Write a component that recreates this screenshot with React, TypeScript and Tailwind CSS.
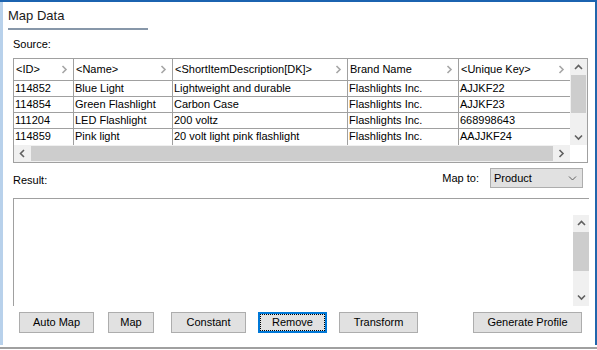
import React from "react";

const headers = ["<ID>", "<Name>", "<ShortItemDescription[DK]>", "Brand Name", "<Unique Key>"];
const colW = ["w-[60px]", "w-[99px]", "w-[175px]", "w-[111px]", "w-[111px]"];

const rows = [
  ["114852", "Blue Light", "Lightweight and durable", "Flashlights Inc.", "AJJKF22"],
  ["114854", "Green Flashlight", "Carbon Case", "Flashlights Inc.", "AJJKF23"],
  ["111204", "LED Flashlight", "200 voltz", "Flashlights Inc.", "668998643"],
  ["114859", "Pink light", "20 volt light pink flashlight", "Flashlights Inc.", "AAJJKF24"],
];

const Chevron = ({ dir, color = "#606060" }: { dir: "up" | "down" | "left" | "right"; color?: string }) => {
  const d = {
    up: "M1 5l3.5-3.5L8 5",
    down: "M1 1.5L4.5 5 8 1.5",
    left: "M5 1L1.5 4.5 5 8",
    right: "M1.5 1L5 4.5 1.5 8",
  }[dir];
  const vertical = dir === "up" || dir === "down";
  return (
    <svg width={vertical ? 9 : 7} height={vertical ? 7 : 9} viewBox={vertical ? "0 0 9 7" : "0 0 7 9"}>
      <path d={d} fill="none" stroke={color} strokeWidth="1.6" />
    </svg>
  );
};

const Button = ({ label, width, focused }: { label: string; width: string; focused?: boolean }) => (
  <button
    className={
      focused
        ? `${width} h-[21px] flex items-center justify-center bg-[#e1e1e1] border-2 border-[#0078d7] outline-1 outline-dotted outline-black outline-offset-[-3px]`
        : `${width} h-[21px] flex items-center justify-center bg-[#e1e1e1] border border-[#adadad]`
    }
  >
    {label}
  </button>
);

export default function App() {
  return (
    <div className="w-[597px] h-[349px] bg-white border-t-2 border-t-[#1b63b0] border-b-2 border-b-[#a0a0a0] font-['Liberation_Sans',Arial,sans-serif] text-[11px] text-black">
      <div className="h-[343px] border-l-[3px] border-l-[#b8d1eb] border-r-2 border-r-[#2166ac] pl-[10px] pr-[7px] flex flex-col">
        {/* title */}
        <div className="-ml-[5px] mt-[6px] w-[140px] pb-[4px] border-b-2 border-[#8797a9] text-[13px] leading-[16px] text-[#1a1a1a]">
          Map Data
        </div>

        <div className="mt-[8px] leading-[13px]">Source:</div>

        {/* source grid */}
        <div className="mt-[7px] w-[575px] h-[105px] border border-[#a0a0a0] flex flex-col">
          <div className="flex h-[86px]">
            <div className="flex flex-col">
              <div className="flex h-[22px] border-b border-[#a0a0a0]">
                {headers.map((h, i) => (
                  <div
                    key={h}
                    className={`${colW[i]} ${i < 4 ? "border-r border-[#a0a0a0]" : ""} flex items-center justify-between pl-[2px] pr-[5px]`}
                  >
                    <span>{h}</span>
                    <Chevron dir="right" color="#a6a6a6" />
                  </div>
                ))}
              </div>
              {rows.map((r, ri) => (
                <div key={ri} className={`flex h-[16px] ${ri < 3 ? "border-b border-[#a0a0a0]" : ""}`}>
                  {r.map((c, i) => (
                    <div
                      key={i}
                      className={`${colW[i]} ${i < 4 ? "border-r border-[#a0a0a0]" : ""} pl-[1px] leading-[15px] whitespace-nowrap overflow-hidden`}
                    >
                      {c}
                    </div>
                  ))}
                </div>
              ))}
            </div>
            {/* vertical scrollbar */}
            <div className="w-[17px] bg-[#f0f0f0] flex flex-col">
              <div className="h-[16px] flex items-center justify-center">
                <Chevron dir="up" />
              </div>
              <div className="h-[38px] mx-[1px] bg-[#cdcdcd]" />
              <div className="flex-1" />
              <div className="h-[16px] flex items-center justify-center">
                <Chevron dir="down" />
              </div>
            </div>
          </div>
          {/* horizontal scrollbar */}
          <div className="flex h-[17px]">
            <div className="w-[556px] bg-[#f0f0f0] flex">
              <div className="w-[17px] flex items-center justify-center">
                <Chevron dir="left" />
              </div>
              <div className="flex-1 my-[1px] bg-[#cdcdcd]" />
              <div className="w-[17px] flex items-center justify-center">
                <Chevron dir="right" />
              </div>
            </div>
            <div className="flex-1 bg-white" />
          </div>
        </div>

        {/* result header */}
        <div className="mt-[5px] h-[20px] flex items-end justify-between w-[570px]">
          <div className="leading-[13px] mb-[1px]">Result:</div>
          <div className="flex items-center h-[20px]">
            <span className="mr-[11px] leading-[13px]">Map to:</span>
            <div className="w-[93px] h-[20px] bg-[#e1e1e1] border border-[#adadad] flex items-center justify-between pl-[3px] pr-[5px]">
              <span>Product</span>
              <svg width="9" height="6" viewBox="0 0 9 6">
                <path d="M1 1.5L4.5 5 8 1.5" fill="none" stroke="#606060" strokeWidth="1" />
              </svg>
            </div>
          </div>
        </div>

        {/* result box */}
        <div className="mt-[10px] w-[576px] h-[108px] border-t border-l border-[#a0a0a0] flex justify-end">
          <div className="mt-[16px] w-[16px] bg-[#f0f0f0] flex flex-col">
            <div className="h-[17px] flex items-center justify-center">
              <Chevron dir="up" />
            </div>
            <div className="h-[39px] bg-[#cdcdcd]" />
            <div className="flex-1" />
            <div className="h-[17px] flex items-center justify-center">
              <Chevron dir="down" />
            </div>
          </div>
        </div>

        {/* buttons */}
        <div className="mt-[6px] flex pl-[6px]">
          <Button label="Auto Map" width="w-[75px]" />
          <div className="ml-[14px]">
            <Button label="Map" width="w-[46px]" />
          </div>
          <div className="ml-[17px]">
            <Button label="Constant" width="w-[75px]" />
          </div>
          <div className="ml-[12px]">
            <Button label="Remove" width="w-[69px]" focused />
          </div>
          <div className="ml-[12px]">
            <Button label="Transform" width="w-[79px]" />
          </div>
          <div className="ml-[55px]">
            <Button label="Generate Profile" width="w-[109px]" />
          </div>
        </div>
      </div>
    </div>
  );
}
